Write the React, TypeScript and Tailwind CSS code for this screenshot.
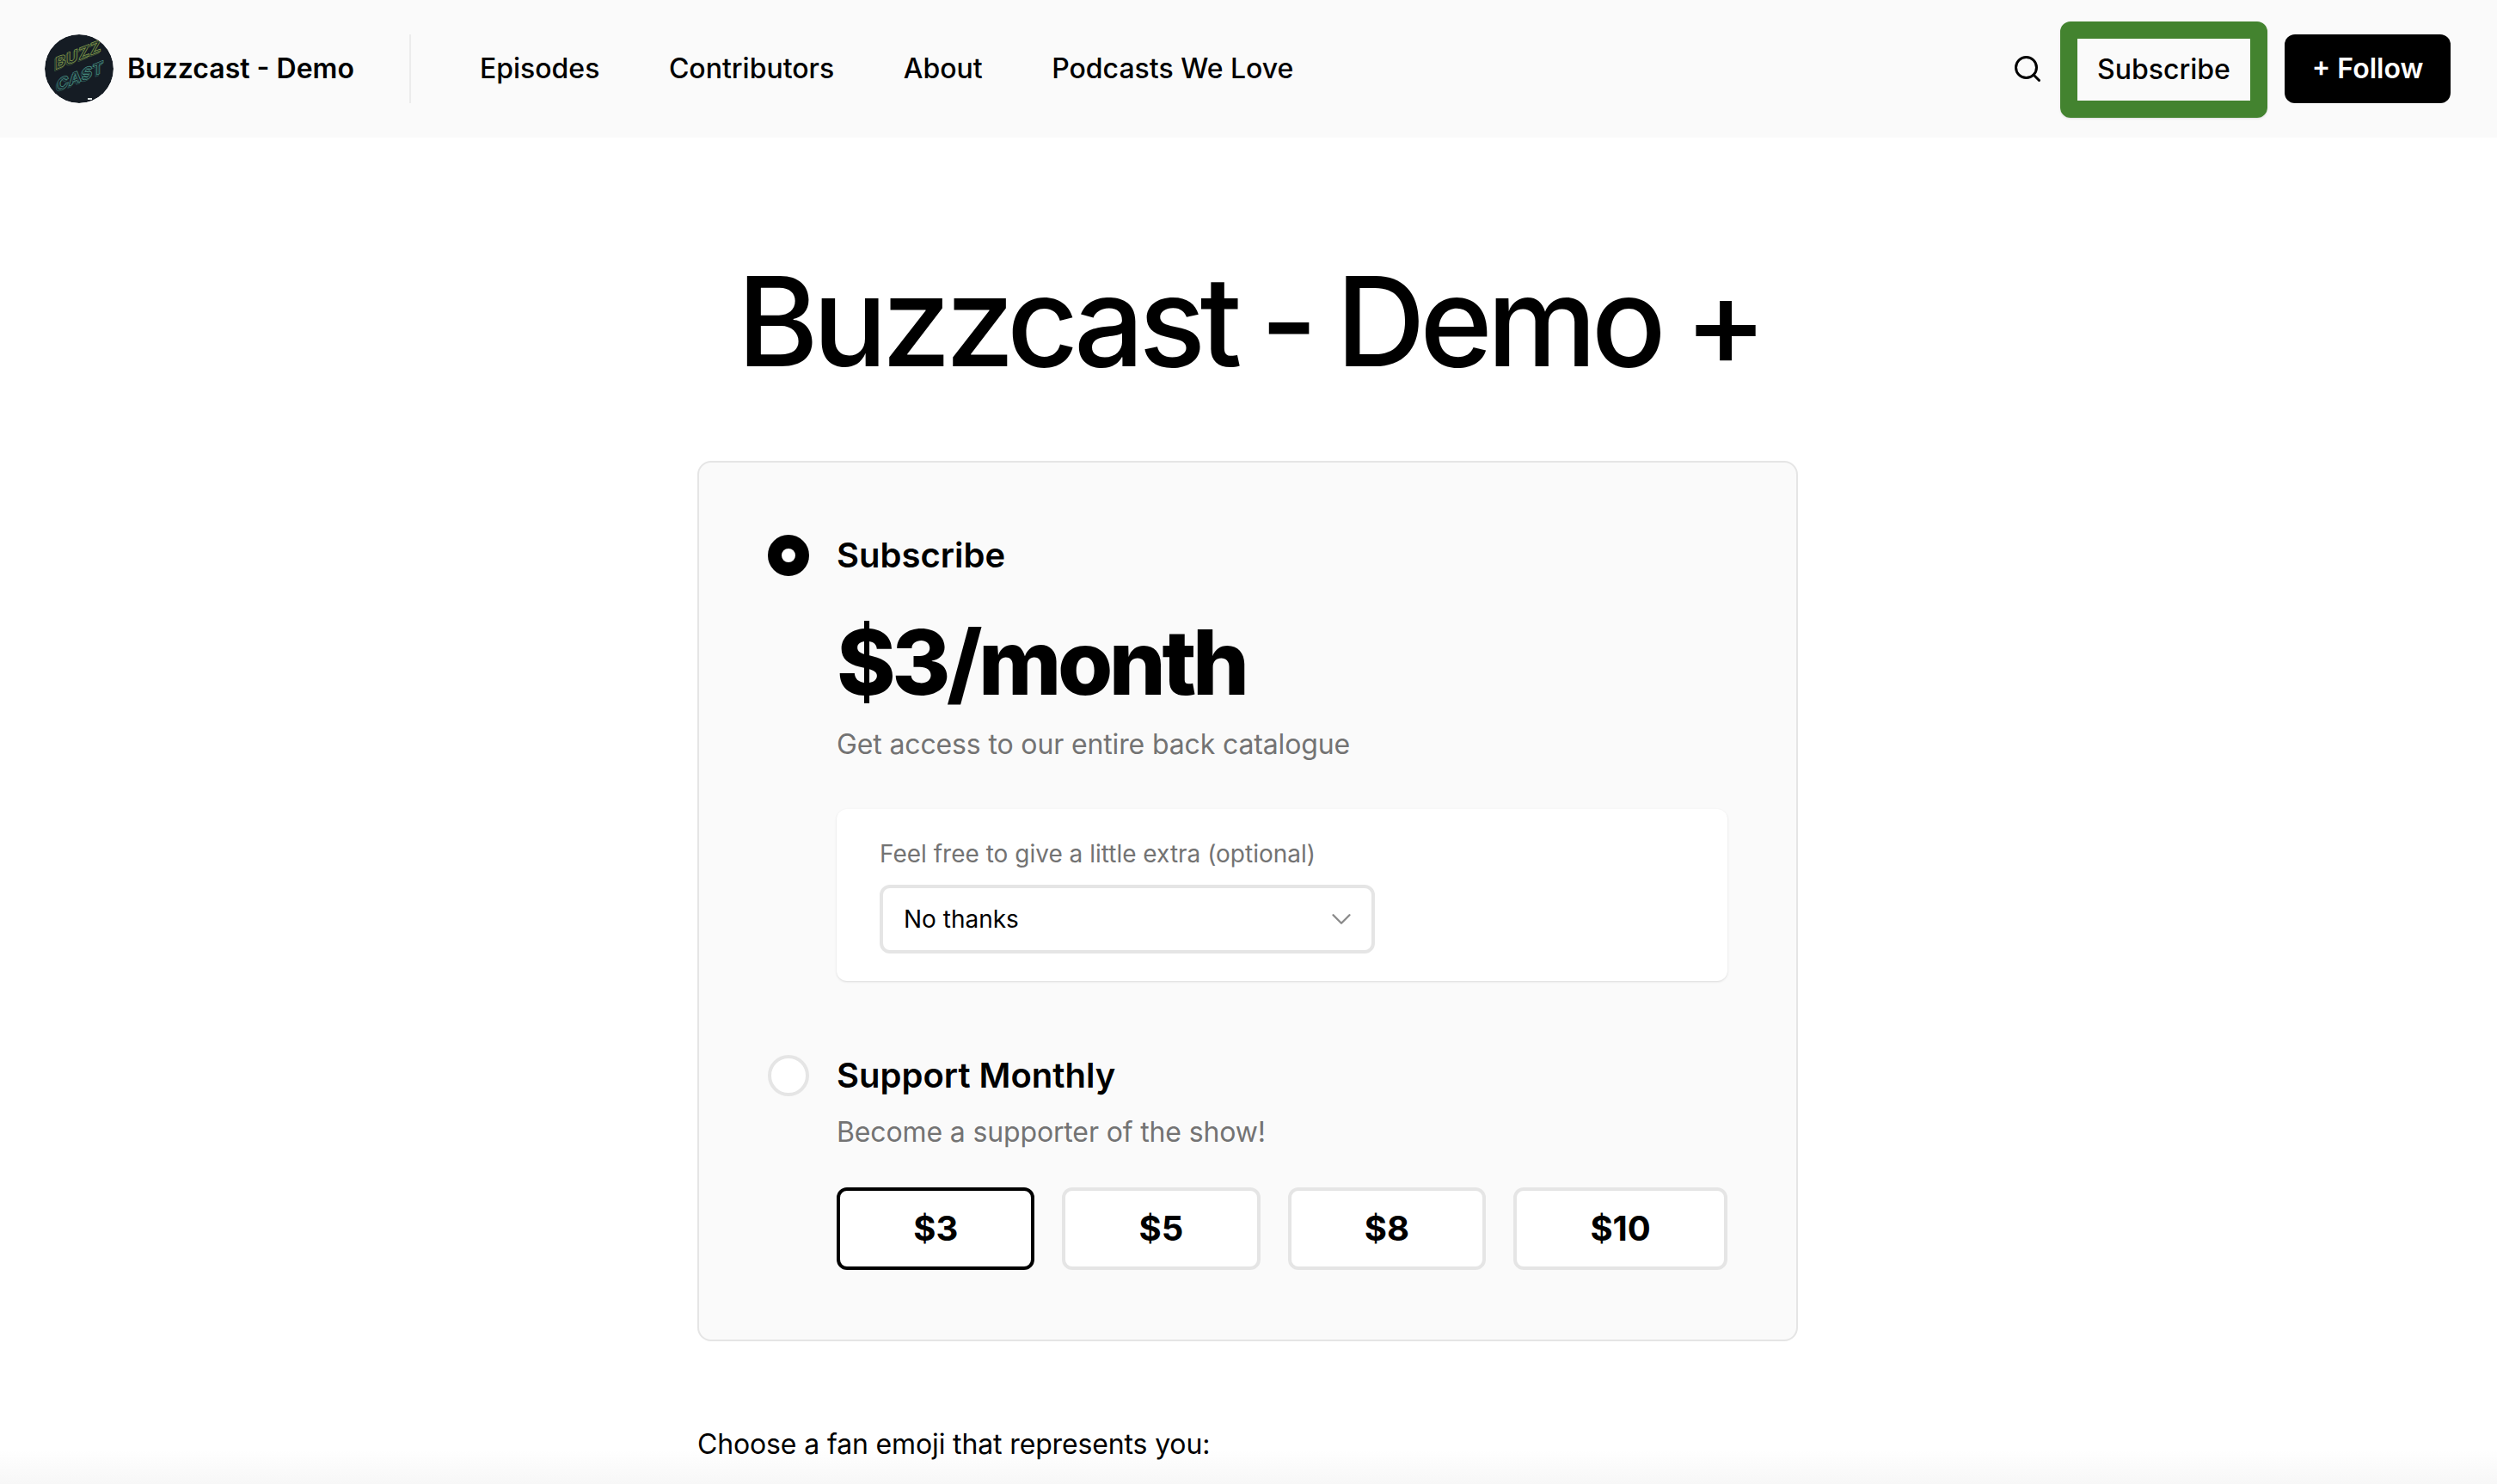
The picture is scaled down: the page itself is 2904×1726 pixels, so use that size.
import React from 'react';
import { Search, ChevronDown } from 'lucide-react';

const navLinks = ['Episodes', 'Contributors', 'About', 'Podcasts We Love'];
const amounts = ['$3', '$5', '$8', '$10'];

// Podcast cover, scaled down to a small circle
const Logo = () => (
  <svg viewBox="0 0 80 80" className="w-20 h-20 rounded-full shrink-0">
    <circle cx="40" cy="40" r="40" fill="#151c24" />
    <g fontFamily="Inter, sans-serif" fontWeight="800" fontSize="19" letterSpacing="0.5" fill="none" strokeWidth="0.7">
      <g transform="translate(12 41) skewY(-22)">
        <text x="-1.5" y="1.5" stroke="#3d5a3a">BUZZ</text>
        <text stroke="#8aa04c">BUZZ</text>
      </g>
      <g transform="translate(14 66) skewY(-22)">
        <text x="-1.5" y="1.5" stroke="#2b5a5a">CAST</text>
        <text stroke="#4d9a8a">CAST</text>
      </g>
    </g>
    <rect x="50" y="74" width="5" height="2" fill="#dfe5e5" />
  </svg>
);

export default function App() {
  return (
    <div className="relative h-[1726px] overflow-hidden bg-white text-black font-['Inter',sans-serif]">
      {/* Fade at the bottom of the window */}
      <div className="absolute bottom-0 inset-x-0 h-[40px] bg-gradient-to-b from-white to-[#f7f7f7]" />

      <header className="relative h-40 bg-[#fafafa] flex items-center justify-between pl-[52px] pr-[54px]">
        <div className="flex items-center">
          <Logo />
          <span className="ml-4 text-[32px] font-semibold">Buzzcast - Demo</span>
          <div className="w-0.5 h-20 bg-[#ececec] ml-[64px] mr-20" />
          <nav className="flex items-center gap-[80.5px]">
            {navLinks.map((link) => (
              <a key={link} className="text-[32px] font-medium">{link}</a>
            ))}
          </nav>
        </div>
        <div className="flex items-center">
          <Search size={36} strokeWidth={2} className="mr-[20px]" />
          <button className="mt-0.5 w-[241px] h-[112px] border-[20px] border-[#43832f] rounded-xl text-[32px] font-medium shadow-sm">
            Subscribe
          </button>
          <button className="ml-5 h-20 w-[193px] bg-black text-white rounded-xl text-[32px] font-semibold">
            + Follow
          </button>
        </div>
      </header>

      <main className="relative w-[1280px] ml-[811px]">
        <h1 className="mt-[134px] pl-1 text-center text-[144px] leading-[160px] font-medium tracking-[-6.5px] [word-spacing:-4px] whitespace-nowrap">Buzzcast - Demo +</h1>

        <section className="mt-[82px] border-2 border-[#e5e5e5] rounded-2xl bg-[#fafafa] px-20 pt-20 pb-[81px]">
          <div className="flex items-center gap-8">
            <div className="w-12 h-12 rounded-full border-[16px] border-black bg-white shrink-0" />
            <h2 className="text-[40px] leading-[56px] font-semibold">Subscribe</h2>
          </div>
          <div className="ml-20">
            <div className="mt-[40px] text-[104px] leading-[112px] font-extrabold tracking-[-4.5px]">$3/month</div>
            <p className="mt-4 text-[32px] leading-[48px] tracking-[-0.14px] text-[#737373]">Get access to our entire back catalogue</p>
            <div className="mt-[51px] bg-white rounded-xl shadow-sm pl-[50px] pr-12 pt-[32px] pb-[32px]">
              <label className="block text-[28px] leading-[40px] text-[#737373]">Feel free to give a little extra (optional)</label>
              <div className="mt-[16px] w-[576px] h-20 border-4 border-[#e5e5e5] rounded-xl bg-white flex items-center justify-between pl-6 pr-4">
                <span className="text-[28px]">No thanks</span>
                <ChevronDown size={38} strokeWidth={1.5} className="text-[#8a8a8a]" />
              </div>
            </div>
          </div>

          <div className="mt-[82px] flex items-center gap-8">
            <div className="w-12 h-12 rounded-full border-4 border-[#e5e5e5] bg-white shrink-0" />
            <h2 className="text-[40px] leading-[56px] font-semibold">Support Monthly</h2>
          </div>
          <div className="ml-20">
            <p className="mt-[14px] text-[32px] leading-[48px] tracking-[-0.14px] text-[#737373]">Become a supporter of the show!</p>
            <div className="mt-[40px] flex gap-8">
              {amounts.map((amount, i) => (
                <button
                  key={amount}
                  className={`flex-auto h-24 px-20 rounded-xl bg-white border-4 text-[40px] font-bold ${i === 0 ? 'border-black' : 'border-[#e5e5e5]'}`}
                >
                  {amount}
                </button>
              ))}
            </div>
          </div>
        </section>

        <p className="mt-[96px] text-[32px] leading-[48px] tracking-[-0.14px]">Choose a fan emoji that represents you:</p>
      </main>
    </div>
  );
}
